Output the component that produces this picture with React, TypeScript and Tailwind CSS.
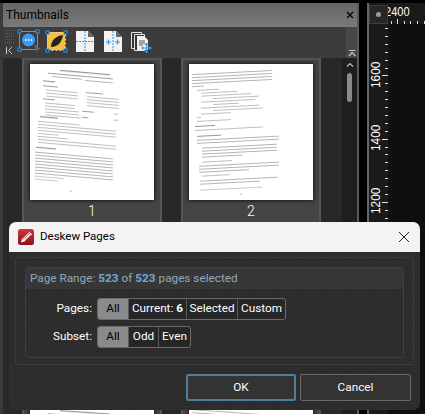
const page1Lines = [
  [30, 7, 50, 1.2], [18, 11, 65, 0.9], [22, 14, 30, 0.7], [55, 15, 28, 0.7],
  [13, 19, 12, 1.1],
  [13, 24, 15, 0.9], [16, 28, 32, 0.6], [16, 31, 32, 0.6], [16, 34, 32, 0.6],
  [56, 27, 17, 0.9], [57, 31, 32, 0.6], [57, 34, 32, 0.6], [57, 37, 32, 0.6], [57, 40, 32, 0.6],
  [13, 37, 12, 0.9], [15, 41, 30, 0.6], [15, 44, 30, 0.6], [15, 47, 34, 0.6], [15, 50, 34, 0.6], [15, 53, 36, 0.6],
  [52, 46, 12, 0.9], [52, 52, 6, 0.9], [84, 46, 4, 0.7], [84, 52, 4, 0.7],
  [10, 55, 18, 1.2],
  [8, 60, 42, 0.6], [8, 63, 78, 0.6], [8, 66, 78, 0.6], [8, 69, 78, 0.6], [8, 72, 20, 0.6], [8, 75, 30, 0.6], [8, 78, 78, 0.6], [8, 81, 78, 0.6],
  [6, 86, 20, 1.1],
  [5, 91, 78, 0.7], [5, 94, 78, 0.7], [5, 97, 78, 0.7], [5, 100, 78, 0.7], [5, 103, 78, 0.7], [5, 106, 78, 0.7], [5, 109, 78, 0.7], [5, 112, 78, 0.7],
  [4, 115, 30, 0.5], [4, 118, 24, 0.5],
  [40, 127, 2, 0.7],
]

const page2Lines = [
  [3, 8, 80, 0.7], [3, 11, 80, 0.7], [3, 14, 80, 0.7], [3, 17, 80, 0.7], [3, 20, 12, 0.7],
  [8, 24, 22, 0.6], [12, 27, 36, 0.6], [12, 30, 50, 0.6], [24, 33, 46, 0.6], [12, 36, 54, 0.6], [24, 39, 26, 0.6], [12, 42, 58, 0.6], [24, 45, 50, 0.6], [12, 48, 30, 0.6], [8, 51, 4, 0.6],
  [8, 55, 34, 0.6],
  [6, 60, 20, 1], [6, 64, 68, 0.6],
  [8, 70, 24, 1], [8, 74, 82, 0.7], [8, 77, 82, 0.7],
  [13, 82, 75, 0.7], [13, 85, 75, 0.7], [13, 88, 75, 0.7], [13, 91, 40, 0.7],
  [13, 96, 30, 0.6],
  [10, 100, 80, 0.7], [10, 103, 80, 0.7], [10, 106, 50, 0.7],
  [13, 110, 28, 0.6],
  [11, 115, 78, 0.7], [11, 118, 60, 0.7],
  [11, 124, 62, 0.5],
  [51, 130, 2, 0.7],
]

const pages = [
  { n: 1, lines: page1Lines, angle: 5 },
  { n: 2, lines: page2Lines, angle: -3 },
  { n: 3, lines: page2Lines, angle: -3 },
  { n: 4, lines: page1Lines, angle: 5 },
  { n: 5, lines: page1Lines, angle: 4 },
  { n: 6, lines: page2Lines, angle: 4 },
]

function PageThumb({ lines, angle }: { lines: number[][]; angle: number }) {
  return (
    <svg viewBox="0 0 124 136" className="block h-[136px] w-[124px] shrink-0 bg-white shadow-[0_0_4px_#000]">
      <g transform={`translate(44 0) skewY(${angle}) translate(-44 0)`} fill="#666666" className="blur-[0.4px]">
        {lines.map((l, i) => (
          <rect key={i} x={l[0]} y={l[1]} width={l[2]} height={l[3]} opacity={0.7} />
        ))}
      </g>
    </svg>
  )
}

// only the first row's numbers are on screen, the others sit under the dialog or below the window
function ThumbCard({ n, lines, angle }: { n: number; lines: number[][]; angle: number }) {
  return (
    <div className="flex h-[164px] w-[140px] flex-col items-center border-x-2 border-t-2 border-[#555555] bg-[#444444] pt-[4px]">
      <PageThumb lines={lines} angle={angle} />
      {n < 3 && <div className="mt-[1px] text-[14px] font-light leading-[20px] text-white">{n}</div>}
    </div>
  )
}

function Handle({ x, y }: { x: number; y: number }) {
  return <rect x={x - 1.5} y={y - 1.5} width="3" height="3" fill="#262626" stroke="#2f9bef" strokeWidth="1" />
}

function DocSplit({ x, inner }: { x: number; inner: boolean }) {
  return (
    <g transform={`translate(${x} 31)`}>
      <path d="M0 0h12l6 6v15H0z" fill="#f2f2f2" />
      <path d="M12 0v6h6z" fill="#666666" />
      <path d="M9 0v21" stroke="#2f9bef" strokeWidth="1" strokeDasharray="2 1" />
      {inner ? (
        <path d="M2 11h5M4.5 8.5v5M11 11h5M13.5 8.5v5" stroke="#2f9bef" strokeWidth="1.2" />
      ) : (
        <path d="M0 10.5h18" stroke="#2f9bef" strokeWidth="1" strokeDasharray="2 1" />
      )}
    </g>
  )
}

function Toolbar() {
  const dots = []
  for (let i = 0; i < 5; i++) {
    for (let j = 0; j < 5; j++) {
      dots.push(<rect key={`${i}-${j}`} x={5 + i * 2} y={30 + j * 3} width="1" height="1" fill="#5c5c5c" />)
    }
  }
  return (
    <svg viewBox="3 27 354 31" className="block h-[31px] w-[354px] bg-[#3c3c3c]">
      <rect x="346" y="27" width="11" height="31" fill="#484848" />
      {dots}
      <path d="M6.5 47v7M12 47l-3.5 3.5L12 54" stroke="#c8c8c8" fill="none" />

      <rect x="19.5" y="31.5" width="18" height="18" fill="none" stroke="#8c8c8c" />
      <circle cx="28.5" cy="40" r="6.5" fill="#3d9df2" />
      <path d="M25 40h1.5M27.8 40h1.5M30.6 40h1.5" stroke="#ffffff" strokeWidth="1.4" />
      <path d="M34 44l7 5-3.5 .5-1.5 3.5z" fill="#666666" />
      <Handle x={19.5} y={31.5} />
      <Handle x={37.5} y={31.5} />
      <Handle x={19.5} y={49.5} />

      <path d="M47 32h18v18H47z" fill="#f4bf3e" />
      <path d="M51 47c0-7 5-11 12-12-1 7-5 12-12 12z" fill="#222222" />
      <path d="M47.5 32.5h18v18h-18z" fill="none" stroke="#d4d4d4" strokeDasharray="2 2" />
      <Handle x={47.5} y={32.5} />
      <Handle x={65.5} y={32.5} />
      <Handle x={47.5} y={50.5} />
      <Handle x={65.5} y={50.5} />

      <DocSplit x={76} inner={false} />
      <DocSplit x={104} inner={true} />

      <path d="M131.5 32.5h10v16h-10z" fill="#333333" stroke="#e4e4e4" />
      <path d="M134.5 34.5h10v16h-10z" fill="#333333" stroke="#e4e4e4" />
      <path d="M137 36h7l4 4v10h-11z" fill="#f2f2f2" />
      <path d="M139 41h6M139 43h6M139 45h4" stroke="#555555" />
      <path d="M142 48h9M146.5 43.5v9" stroke="#2f9bef" strokeWidth="1.2" />
      <path d="M141 48l2.5-2v4zM152 48l-2.5-2v4zM146.5 42.5l-2 2.5h4zM146.5 53.5l-2-2.5h4z" fill="#2f9bef" />

      <path d="M349 50.5h6.5" stroke="#c0c0c0" />
      <path d="M349 56l3.2-3.5 3.2 3.5" stroke="#c0c0c0" fill="none" strokeWidth="1.2" />
    </svg>
  )
}

function Ruler() {
  const vTicks = Array.from({ length: 49 }, (_, i) => 28 + i * 7.9)
  const hTicks = [391, 397, 404, 410, 417, 424]
  const label = { fill: '#ffffff', fontSize: 13.5, fontFamily: '"Liberation Sans", sans-serif' }
  return (
    <div className="mt-[3px] h-[411px] flex-1 border-l-2 border-[#666666] bg-[#0f0f0f]">
      <svg viewBox="369 3 56 411" className="block h-[411px] w-[56px]">
        <rect x="369" y="3" width="19" height="411" fill="#1a1a1a" />
        <rect x="369" y="3" width="56" height="21" fill="#1a1a1a" />
        <text transform="translate(385 16) scale(0.82 1)" {...label}>2400</text>
        <rect x="369.5" y="5.5" width="18" height="18" fill="#262626" stroke="#3e3e3e" />
        <circle cx="378.5" cy="14.5" r="2.5" fill="#9a9a9a" />
        {hTicks.map((x, i) => (
          <rect key={x} x={x} y={i === 1 ? 19 : 21} width="1" height={i === 1 ? 5 : 3} fill="#e0e0e0" />
        ))}
        {vTicks.map((y, i) => (
          <rect key={i} x={i % 8 === 6 ? 382 : 385} y={Math.round(y)} width={i % 8 === 6 ? 6 : 3} height="1" fill="#e0e0e0" />
        ))}
        <text transform="translate(380 88) rotate(-90) scale(0.88 1)" {...label}>1600</text>
        <text transform="translate(380 151) rotate(-90) scale(0.88 1)" {...label}>1400</text>
        <text transform="translate(380 214) rotate(-90) scale(0.88 1)" {...label}>1200</text>
      </svg>
    </div>
  )
}

function Segment({ label, w, active, bold }: { label: string; w: string; active?: boolean; bold?: string }) {
  return (
    <div className={`flex h-full items-center justify-center border-r border-[#5a5a5a] last:border-r-0 ${w} ${active ? 'bg-[#8a8a8a] text-black' : 'text-white'}`}>
      {label}
      {bold && <span className="ml-[3px] font-bold">{bold}</span>}
    </div>
  )
}

function Dialog() {
  return (
    <div className="absolute left-[9px] top-[222px] h-[188px] w-[411px] overflow-hidden rounded-[7px] bg-[#2c2c2c] bg-[radial-gradient(#333333_0.6px,transparent_0.7px)] bg-[length:3px_3px] font-['Roboto',sans-serif] text-[11.75px] text-white">
      <div className="flex h-[30px] items-center bg-[#f3f3f3] pl-[9px] pr-[9px] text-black">
        <svg width="16" height="16" viewBox="0 0 16 16">
          <defs>
            <linearGradient id="logo" x1="0" y1="0" x2="0" y2="1">
              <stop offset="0" stopColor="#d23a3a" />
              <stop offset="1" stopColor="#8c1015" />
            </linearGradient>
          </defs>
          <rect width="16" height="16" rx="2.5" fill="url(#logo)" />
          <path d="M3 13.5l1-3.5 7.5-7 2.5 2.5L6.5 12.5z" fill="#ffffff" />
          <path d="M5 10.5l7-6.5M7 11.5l6-5.5" stroke="#c4282c" strokeWidth="0.8" />
        </svg>
        <span className="ml-[6px] flex-1 text-[11.5px]">Deskew Pages</span>
        <svg width="14" height="14" viewBox="0 0 14 14">
          <path d="M2 2l10 10M12 2L2 12" stroke="#222222" strokeWidth="1" />
        </svg>
      </div>
      <div className="mx-[6px] mt-[5px] h-[108px] rounded-[3px] border border-[#3c3c3c] px-[9px] pt-[9px]">
        <div className="h-[91px] rounded-[3px] border border-[#404040]">
          <div className="flex h-[21px] items-center bg-[#373737] pl-[4px] text-[#93a9bd]">
            Page Range:
            <span className="ml-[3px] font-bold text-[#6fa8d8]">523</span>
            <span className="ml-[3px]">of</span>
            <span className="ml-[3px] font-bold text-[#6fa8d8]">523</span>
            <span className="ml-[3px]">pages selected</span>
          </div>
          <div className="flex flex-col gap-[6px] pt-[9px]">
            <div className="flex items-center">
              <span className="w-[66px] text-right">Pages:</span>
              <div className="ml-[5px] flex h-[22px] w-[189px] items-center overflow-hidden rounded-[3px] border border-[#6a6a6a] bg-[#262626]">
                <Segment label="All" w="w-[31px]" active />
                <Segment label="Current:" bold="6" w="w-[58px]" />
                <Segment label="Selected" w="w-[51px]" />
                <Segment label="Custom" w="w-[47px]" />
              </div>
            </div>
            <div className="flex items-center">
              <span className="w-[66px] text-right">Subset:</span>
              <div className="ml-[5px] flex h-[22px] w-[94px] items-center overflow-hidden rounded-[3px] border border-[#6a6a6a] bg-[#262626]">
                <Segment label="All" w="w-[31px]" active />
                <Segment label="Odd" w="w-[30px]" />
                <Segment label="Even" w="w-[31px]" />
              </div>
            </div>
          </div>
        </div>
      </div>
      <div className="mt-[9px] flex justify-end gap-[4px] pr-[9px]">
        <button className="h-[27px] w-[110px] rounded-[2px] border-2 border-[#4d7f9c] bg-[#333333] text-white">OK</button>
        <button className="h-[27px] w-[111px] rounded-[2px] border border-[#6a6a6a] bg-[#333333] text-white">Cancel</button>
      </div>
    </div>
  )
}

export default function App() {
  return (
    <div className="relative flex h-[414px] w-[425px] overflow-hidden bg-black font-['Roboto',sans-serif]">
      <div className="mt-[3px] flex w-[359px] flex-col border-l-[3px] border-r-2 border-l-[#3a3a3a] border-r-[#5a5a5a]">
        <div className="flex h-[24px] items-center justify-between bg-[linear-gradient(#666666,#7a7a7a)] pl-[3px] pr-[3px] text-[12px] text-black">
          <span>Thumbnails</span>
          <svg width="8" height="8" viewBox="0 0 8 8">
            <path d="M1 1l6 6M7 1L1 7" stroke="#000000" strokeWidth="1.3" />
          </svg>
        </div>
        <Toolbar />
        <div className="flex flex-1 overflow-hidden bg-[#282828]">
          <div className="grid flex-1 grid-cols-[140px_140px] content-start gap-x-[19px] gap-y-[6px] pl-[19px]">
            {pages.map(p => (
              <ThumbCard key={p.n} n={p.n} lines={p.lines} angle={p.angle} />
            ))}
          </div>
          <div className="flex w-[15px] flex-col items-center bg-[#1e1e1e] pt-[4px]">
            <svg width="8" height="5" viewBox="0 0 8 5">
              <path d="M1 4.5l3-3 3 3" stroke="#c0c0c0" fill="none" strokeWidth="1.2" />
            </svg>
            <div className="mt-[6px] h-[29px] w-[5px] rounded-full bg-[#8a8a8a]" />
          </div>
        </div>
      </div>
      <div className="w-[8px]" />
      <Ruler />
      <Dialog />
    </div>
  )
}
